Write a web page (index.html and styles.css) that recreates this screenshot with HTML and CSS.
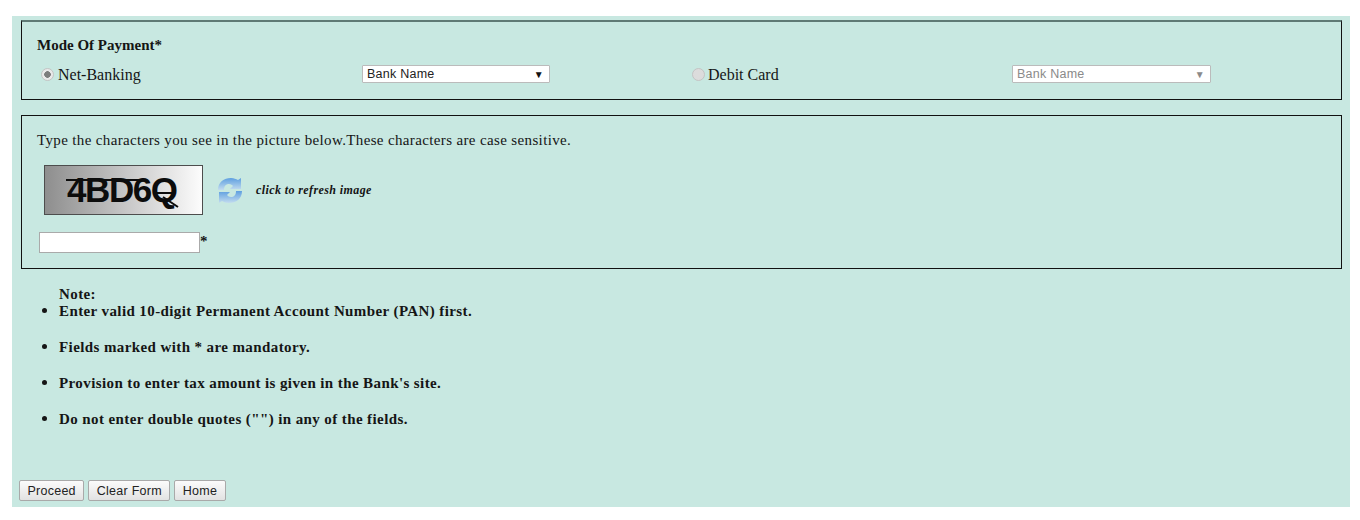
FILE: index.html
```html
<!DOCTYPE html>
<html lang="en">
<head>
<meta charset="utf-8">
<title>Payment</title>
<link rel="stylesheet" href="styles.css">
</head>
<body>
<form class="panel">
  <fieldset class="box box-mode">
    <div class="mode-title">Mode Of Payment*</div>
    <div class="mode-row">
      <label class="radio-label col-a"><span class="radio radio-on"></span>Net-Banking</label>
      <div class="col-b"><div class="select"><span>Bank Name</span><span class="arrow">▼</span></div></div>
      <label class="radio-label col-c"><span class="radio"></span>Debit Card</label>
      <div class="col-d"><div class="select select-off"><span>Bank Name</span><span class="arrow">▼</span></div></div>
    </div>
  </fieldset>
  <fieldset class="box box-captcha">
    <div class="captcha-hint">Type the characters you see in the picture below.These characters are case sensitive.</div>
    <div class="captcha-row">
      <div class="captcha">
        <svg class="captcha-img" width="157" height="48" viewBox="0 0 157 48">
          <text x="22" y="36" class="captcha-text" textLength="111" lengthAdjust="spacing">4BD6Q</text>
          <path d="M21 14H100M112 27H128M118 31L133 41" fill="none" stroke="#0c0c0c" stroke-width="2"/>
        </svg>
      </div>
      <svg class="refresh" width="26" height="27" viewBox="0 0 26 27">
        <defs>
          <linearGradient id="rg" x1="0" y1="0" x2="0" y2="1">
            <stop offset="0" stop-color="#5e9fe0"/>
            <stop offset="1" stop-color="#c3dcef"/>
          </linearGradient>
        </defs>
        <path d="M1 13C1 5 7 1 14 1c3 0 5 1 7 2l3-2v11H13l3-3c-1-1-2-2-4-2-3 0-5 2-5 6z" fill="url(#rg)"/>
        <path d="M25 14c0 8-6 12-13 12-3 0-5-1-7-2l-3 2V15h11l-3 3c1 1 2 2 4 2 3 0 5-2 5-6z" fill="url(#rg)"/>
      </svg>
      <span class="refresh-text">click to refresh image</span>
    </div>
    <div class="captcha-input"><span class="input"></span><span class="star">*</span></div>
  </fieldset>
  <div class="notes">
    <div class="note-title">Note:</div>
    <ul class="note-list">
      <li>Enter valid 10-digit Permanent Account Number (PAN) first.</li>
      <li>Fields marked with * are mandatory.</li>
      <li>Provision to enter tax amount is given in the Bank's site.</li>
      <li>Do not enter double quotes ("") in any of the fields.</li>
    </ul>
  </div>
  <div class="actions">
    <button type="button" class="btn">Proceed</button>
    <button type="button" class="btn">Clear Form</button>
    <button type="button" class="btn">Home</button>
  </div>
</form>
</body>
</html>
```
FILE: styles.css
```css
* { box-sizing: border-box; }
html, body { margin: 0; padding: 0; background: #fff; }
body {
  height: 520px;
  overflow: hidden;
  padding: 16px 10px 13px 12px;
  font-family: "Liberation Serif", serif;
  font-size: 15px;
  color: #151515;
}
.panel {
  height: 491px;
  margin: 0;
  background: #c8e8e1;
  padding-top: 4px;
  display: flex;
  flex-direction: column;
}
.box {
  margin: 0 8px 0 9px;
  padding: 0;
  border: 1px solid #111;
  min-width: 0;
}
.box-mode { height: 80px; border-top: 2px solid #5f7a75; padding: 15px 15px 0; }
.mode-title { font-weight: bold; line-height: 16px; }
.mode-row { display: flex; align-items: center; margin-top: 12px; height: 20px; }
.col-a { width: 325px; padding-left: 4px; }
.col-b { width: 330px; }
.col-c { width: 320px; }
.col-d { width: 200px; }
.radio-label { display: flex; align-items: center; font-size: 16px; }
.radio {
  width: 13px; height: 13px; border-radius: 50%;
  margin: 0 3px 2px 0;
  background: #dcdcdc;
  border: 1px solid #c4c4c4;
  display: inline-block;
  flex: none;
}
.radio-on { margin-right: 4px; background: radial-gradient(circle, #7d7d7d 0 3px, #e9e9e9 3.6px); }
.select {
  display: flex; justify-content: space-between; align-items: center;
  width: 188px; height: 18px;
  margin-bottom: 2px;
  background: #fff;
  border: 1px solid #bbb;
  border-radius: 1px;
  padding: 0 5px 0 4px;
  font-family: "Liberation Sans", sans-serif;
  font-size: 12.5px;
  letter-spacing: 0.25px;
  color: #222;
}
.arrow { font-size: 10px; color: #111; }
.select-off { width: 199px; color: #8a8a8a; }
.select-off .arrow { color: #8a8a8a; }
.box-captcha { height: 154px; margin-top: 15px; padding: 16px 15px 0; }
.captcha-hint { line-height: 17px; letter-spacing: 0.36px; }
.captcha-row { display: flex; align-items: center; margin-top: 16px; margin-left: 7px; }
.captcha {
  width: 159px; height: 50px;
  border: 1px solid #4d4d4d;
  background: linear-gradient(90deg, #8e8e8e, #fcfcfc);
}
.captcha-img { display: block; }
.captcha-text { font: bold 35px "Liberation Sans", sans-serif; fill: #0c0c0c; }
.refresh { margin-left: 14px; flex: none; }
.refresh-text { margin-left: 13px; font-size: 12px; font-style: italic; font-weight: bold; letter-spacing: 0.4px; }
.captcha-input { display: flex; align-items: center; margin: 17px 0 0 2px; }
.input { width: 161px; height: 21px; background: #fff; border: 1px solid #aaa; display: block; }
.star { margin-top: -2px; font-weight: bold; }
.notes { margin: 18px 0 0 47px; font-weight: bold; letter-spacing: 0.4px; }
.note-title { line-height: 14px; margin-bottom: 2px; }
.note-list { margin: 0; padding: 0; }
.note-list li { line-height: 16px; margin-bottom: 20px; list-style: disc; }
.note-list li::marker { font-size: 17px; letter-spacing: 0; }
.actions { margin-top: auto; padding: 0 0 6px 7px; display: flex; gap: 4px; }
.btn {
  height: 21px;
  padding: 0 7.5px;
  font-family: "Liberation Sans", sans-serif;
  font-size: 12.5px;
  letter-spacing: 0.25px;
  color: #222;
  background: linear-gradient(#fbfbfb, #e2e2e2);
  border: 1px solid #a9a9a9;
  border-radius: 2px;
}
```
